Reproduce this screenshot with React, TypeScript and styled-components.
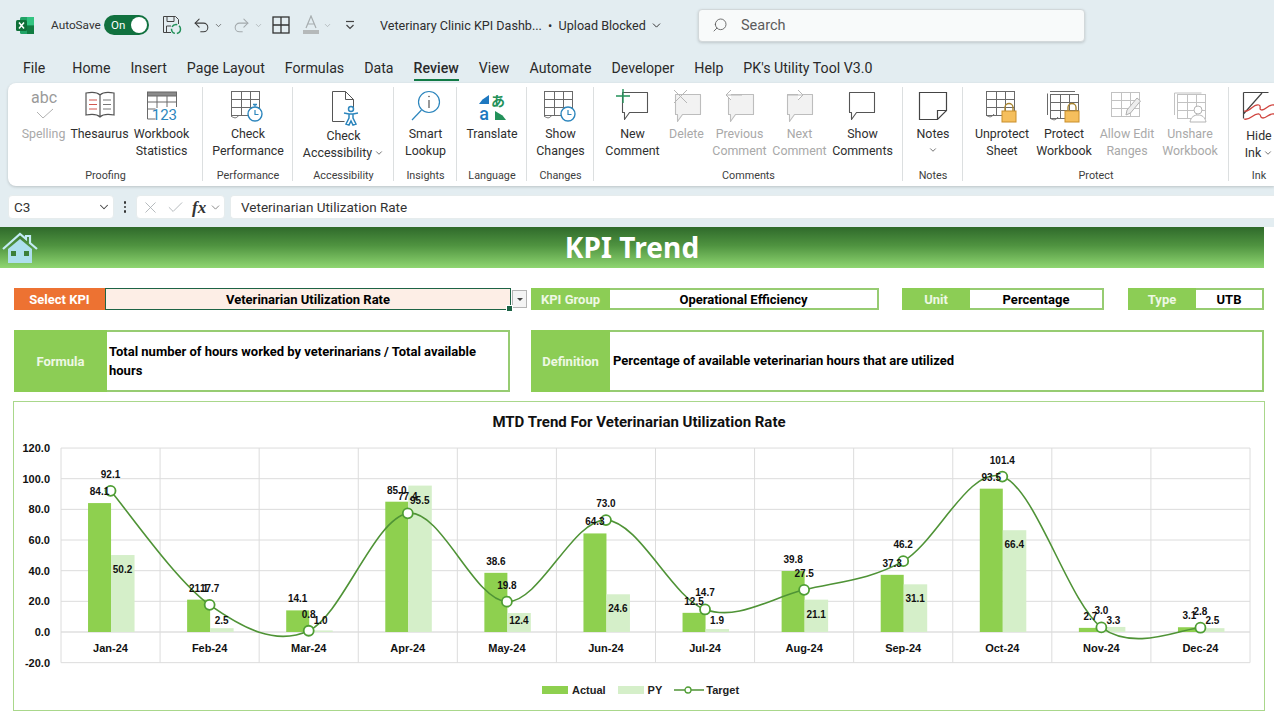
import React from "react";
import styled, { createGlobalStyle } from "styled-components";
import { ChevronDown, Search as SearchGlyph, Undo2, Redo2, X, Check } from "lucide-react";

const UI = `Roboto, "Liberation Sans", sans-serif`;
const SHEET = `Roboto, "Liberation Sans", sans-serif`;

const Global = createGlobalStyle`
  html, body { margin: 0; padding: 0; background: #fff; overflow: hidden; }
  body { width: 1274px; height: 720px; font-family: ${UI}; }
  * { box-sizing: border-box; }
`;

const Page = styled.div`width: 1274px; height: 720px; overflow: hidden; display: flex; flex-direction: column;`;
const Chrome = styled.header`background: #e3edf1; padding-bottom: 8px; color: #2b2b2b;`;

const TitleBar = styled.div`height: 50px; display: flex; align-items: center; padding-left: 16px;`;
const QatSlot = styled.span<{ $ml?: number; $w?: number; $muted?: boolean }>`
  margin-left: ${p => p.$ml ?? 0}px;
  ${p => (p.$w ? `width: ${p.$w}px;` : "")}
  display: inline-flex; align-items: center; justify-content: center;
  color: ${p => (p.$muted ? "#a3a9ac" : "#3c3c3c")};
  flex: none;
`;
const AutoSave = styled.span`margin-left: 17px; width: 53px; flex: none; font-size: 11.8px; color: #333;`;
const Toggle = styled.span`
  width: 45px; height: 20px; border-radius: 10px; background: #11713f;
  color: #fff; font-size: 11.5px; display: flex; align-items: center; justify-content: space-between;
  padding: 0 2px 0 7px; flex: none;
`;
const Knob = styled.i`width: 16px; height: 16px; border-radius: 50%; background: #fff; display: block;`;
const DocTitle = styled.span`margin-left: 25px; width: 285px; flex: none; font-size: 12.6px; color: #2e2e2e; white-space: pre; display: flex; align-items: center; gap: 4px;`;
const SearchBox = styled.div`
  margin-left: 33px; width: 387px; height: 33px; background: #f8fafa; border: 1px solid #d2d8da; border-radius: 4px;
  box-shadow: 0 1px 3px rgba(0,0,0,.16); display: flex; align-items: center; gap: 13px; padding-left: 13px;
  font-size: 14.5px; color: #5c5c5c; flex: none;
`;
const MirroredSearch = styled(SearchGlyph)`transform: scaleX(-1);`;

const TabBar = styled.nav`height: 33px; display: flex; align-items: flex-start; padding: 7px 0 0 23px; gap: 20px;`;
const Tab = styled.span<{ $on?: boolean; $extra?: number }>`
  position: relative; font-size: 14.2px; line-height: 22px; color: #2a2a2a; margin-right: ${p => p.$extra ?? 0}px;
  font-weight: ${p => (p.$on ? 500 : 400)};
  ${p => p.$on ? `&::after { content: ""; position: absolute; left: 0; right: 0; bottom: -2px; height: 2.5px; background: #117a45; }` : ""}
`;

const Ribbon = styled.section`
  height: 103px; margin-left: 8px; background: #fff; border-radius: 8px 0 0 8px;
  box-shadow: 0 1px 3px rgba(0,0,0,.18); display: flex; overflow: hidden;
`;
const Group = styled.div<{ $w: number; $last?: boolean }>`
  width: ${p => p.$w}px; flex: none; display: flex; flex-direction: column; position: relative;
  padding-top: 5px;
  &::after { content: ""; display: ${p => (p.$last ? "none" : "block")}; position: absolute; right: 0; top: 4px; bottom: 5px; width: 1px; background: #dcdfe0; }
`;
const GroupButtons = styled.div`flex: 1; display: flex; justify-content: center; min-height: 0;`;
const GroupName = styled.div`height: 20px; text-align: center; font-size: 10.8px; line-height: 20px; color: #3d3d3d;`;
const RibbonButton = styled.div<{ $w: number; $off?: boolean }>`
  width: ${p => p.$w}px; flex: none; display: flex; flex-direction: column; align-items: center;
  font-size: 12.4px; line-height: 17px; text-align: center; white-space: nowrap;
  color: ${p => (p.$off ? "#a9a9a9" : "#2f2f2f")};
`;
const IconSlot = styled.div<{ $h?: number }>`height: ${p => p.$h ?? 37}px; padding-top: 1px; display: flex; align-items: flex-start; justify-content: center;`;
const BtnChevron = styled.span`display: inline-flex; vertical-align: -1px; margin-left: 2px;`;

const FormulaBar = styled.div`height: 24px; margin-top: 9px; display: flex; align-items: stretch; padding-left: 8px; font-size: 13.5px;`;
const Cellbox = styled.div<{ $w?: number }>`
  ${p => (p.$w ? `width: ${p.$w}px; flex: none;` : "flex: 1;")}
  background: #fff; display: flex; align-items: center; border: 1px solid #e6eced;
  ${p => (p.$w ? "border-radius: 4px;" : "border-radius: 4px 0 0 4px; border-right: 0;")}
`;
const NameText = styled.span`padding-left: 5px; flex: 1; color: #333;`;
const Dots = styled.span`width: 22px; display: flex; flex-direction: column; gap: 2px; align-items: center; justify-content: center;
  i { width: 2.5px; height: 2.5px; background: #333; border-radius: 50%; display: block; }`;
const Fx = styled.span`font-family: "Liberation Serif", serif; font-style: italic; font-weight: 700; font-size: 17px; color: #333; margin-left: 7px; line-height: 1;`;
const FormulaText = styled.span`padding-left: 10px; color: #333;`;

const Sheet = styled.main`flex: 1; background: #fff; color: #000; font-family: ${SHEET};`;
const Banner = styled.div`
  width: 1264px; height: 41px; display: grid; grid-template-columns: 1fr auto 1fr; align-items: center;
  background: linear-gradient(#2f6a2b 0%, #4f9340 45%, #8fd671 100%);
`;
const BannerTitle = styled.h1`margin: 0 0 2px; font: 700 28px/1 "Noto Sans", sans-serif; color: #fff; letter-spacing: .1px;`;
const HomeLink = styled.span`display: flex; padding-left: 2px;`;

const FieldRow = styled.div<{ $h: number; $mt: number }>`display: flex; height: ${p => p.$h}px; margin-top: ${p => p.$mt}px; padding-left: 14px;`;
const Field = styled.div<{ $w: number; $gap?: number }>`
  width: ${p => p.$w}px; margin-left: ${p => p.$gap ?? 0}px; flex: none; display: flex; border: 2px solid #97cc72; border-left: 0;
  font-size: 13px; font-weight: 700;
`;
const FieldLabel = styled.div<{ $w: number; $orange?: boolean }>`
  width: ${p => p.$w}px; flex: none; margin: -2px 0; display: flex; align-items: center; justify-content: center;
  background: ${p => (p.$orange ? "#ed7232" : "#8ccd55")}; color: ${p => (p.$orange ? "#fff" : "#eef8e4")}; font-weight: 700;
`;
const FieldValue = styled.div`flex: 1; display: flex; align-items: center; justify-content: center;`;
const SelectedValue = styled(FieldValue)`
  background: #fdeee6; border: 1.5px solid #1d6345; position: relative;
  &::after { content: ""; position: absolute; right: -3px; bottom: -3px; width: 5px; height: 5px; background: #1d6345; border: 1px solid #fff; }
`;
const SelectField = styled(Field)`border: 0;`;
const SelectLabel = styled(FieldLabel)`margin: 0;`;
const DropArrow = styled.div`
  width: 15px; height: 18px; margin-left: 1px; align-self: center; background: #f4f4f4; border: 1px solid #b4b4b4; flex: none;
  display: flex; align-items: center; justify-content: center;
  &::before { content: ""; border: 3px solid transparent; border-top: 3.5px solid #444; border-bottom: 0; }
`;
const LongValue = styled.div<{ $pl: number }>`flex: 1; display: flex; align-items: center; padding: 0 4px 0 ${p => p.$pl}px; line-height: 19.5px;`;

const ChartCard = styled.section`
  width: 1252px; height: 310px; margin: 9px 0 0 13px; border: 1.5px solid #a9d78b; display: flex; flex-direction: column; align-items: center;
`;
const ChartTitle = styled.h2`margin: 0; height: 39.5px; font: 700 15px/40px ${SHEET}; color: #111;`;
const Legend = styled.div`display: flex; align-items: center; font: 700 11px/1 "Liberation Sans", sans-serif; color: #222; margin-top: 9px; margin-left: 3px;`;
const Swatch = styled.i<{ $c: string; $ml?: number }>`display: block; width: 26px; height: 8px; background: ${p => p.$c}; margin: 0 4px 0 ${p => p.$ml ?? 0}px;`;
const LegendLine = styled.svg`margin: 0 2px 0 12px;`;
const AxisText = styled.text`font: 700 11px "Liberation Sans", sans-serif; fill: #111;`;
const DataText = styled.text`font: 700 10px "Liberation Sans", sans-serif; fill: #111;`;

const G = "#6a6a6a";
const Svg = ({ w = 34, h = 34, children }: { w?: number; h?: number; children: React.ReactNode }) => (
  <svg width={w} height={h} viewBox={`0 0 ${w} ${h}`} fill="none" stroke={G} strokeWidth="1">{children}</svg>
);

const Grid = ({ x = 3, y = 2, c = G }: { x?: number; y?: number; c?: string }) => (
  <g stroke={c}>
    <rect x={x + .5} y={y + .5} width="28" height="24" fill="#fff" />
    <path d={`M${x} ${y + 8.5}h28M${x} ${y + 16.5}h28M${x + 10.5} ${y}v24M${x + 19.5} ${y}v24`} />
  </g>
);
const Clock = ({ cx, cy, stop }: { cx: number; cy: number; stop?: boolean }) => (
  <g stroke="#2d86bd" fill="#fff">
    <circle cx={cx} cy={cy} r="7" strokeWidth="1.4" />
    <path d={`M${cx} ${cy - 4}v4.5h3.5`} fill="none" strokeWidth="1.2" />
    {stop && <path d={`M${cx - 2} ${cy - 9.5}h4M${cx} ${cy - 9.5}v2`} strokeWidth="1.4" />}
  </g>
);
const Lock = ({ x, y }: { x: number; y: number }) => (
  <g>
    <path d={`M${x + 3} ${y + 7}v-3.5a4 4 0 0 1 8 0v3.5`} stroke="#a8842e" strokeWidth="1.4" fill="none" />
    <rect x={x} y={y + 7} width="14" height="11" fill="#f5bf5d" stroke="#c98f2c" />
  </g>
);
const Bubble = ({ c = "#555", fill = "#fff", x = 6, y = 4 }: { c?: string; fill?: string; x?: number; y?: number }) => (
  <path d={`M${x + .5} ${y + .5}h25v20h-18l-5 7v-7h-2z`} stroke={c} fill={fill} strokeWidth="1.1" strokeLinejoin="round" />
);
const CH = ({ s = 11, c = "#444" }: { s?: number; c?: string }) => <ChevronDown size={s} color={c} strokeWidth={1.8} />;

const Icons = {
  spelling: (
    <Svg><text x="17" y="14" textAnchor="middle" fontFamily={UI} fontSize="16" fill="#9a9a9a" stroke="none">abc</text><path d="M10 23l6 6 10-9" stroke="#b2b2b2" /></Svg>
  ),
  thesaurus: (
    <Svg><path d="M17 6c-3-3-9-3-14-2v22c5-1 11-1 14 2 3-3 9-3 14-2V4c-5-1-11-1-14 2zM17 6v22" stroke="#555" strokeWidth="1.2" fill="#fff" />
      <path d="M6 11h8M6 15.5h8M6 20h8" stroke="#d1574f" /><path d="M20 11h8M20 15.5h8M20 20h8" stroke="#777" /></Svg>
  ),
  stats: (
    <Svg><rect x="2.5" y="3" width="29" height="4" fill="#8a8a8a" stroke="#666" /><path d="M2.5 7v23h8M31.5 7v11M2.5 13h29M2.5 20h8M12 7v12M22 7v11" />
      <text x="32" y="31" textAnchor="end" fontFamily={UI} fontSize="15" fill="#2d86bd" stroke="none">123</text></Svg>
  ),
  performance: (
    <Svg w={38}><Grid x={2} y={2} /><path d="M2 27c4 3 6 2 8-1" /><Clock cx={26} cy={25} stop /></Svg>
  ),
  accessibility: (
    <Svg w={36} h={38}><path d="M6.5 2.5h13l8 8v8M6.5 2.5v30h12M19.5 2.5v8h8" stroke="#555" />
      <g stroke="#2d86bd" strokeWidth="1.5" fill="#fff"><circle cx="25" cy="20" r="2.5" /><path d="M18 24l5 1h4l5-1M23 25v4l-3 6 3 1 2-4 2 4 3-1-3-6v-4" /></g></Svg>
  ),
  lookup: (
    <Svg><circle cx="20" cy="13" r="10.5" stroke="#2d86bd" strokeWidth="1.2" /><path d="M12.5 21L3 31" stroke="#2d86bd" strokeWidth="1.2" /><path d="M20 11v8" stroke="#555" strokeWidth="1.2" /><circle cx="20" cy="7.5" r=".8" fill="#555" stroke="none" /></Svg>
  ),
  translate: (
    <Svg>
      <path d="M14 6v9H4l3.5-4.5z" fill="#1e78c0" stroke="none" />
      <text x="23" y="17" textAnchor="middle" fontFamily={`"Noto Sans CJK JP", sans-serif`} fontWeight="700" fontSize="14" fill="#23915a" stroke="none">あ</text>
      <text x="9" y="31" textAnchor="middle" fontFamily={UI} fontWeight="500" fontSize="18" fill="#1e78c0" stroke="none">a</text>
      <path d="M20 22v9h11l-3.5-4.5z" fill="#23915a" stroke="none" />
    </Svg>
  ),
  changes: (
    <Svg w={38}><Grid x={2} y={2} /><path d="M2 27c4 3 6 2 8-1" /><Clock cx={26} cy={25} /></Svg>
  ),
  newComment: (
    <Svg w={38}><Bubble x={8} y={3} /><path d="M9 0v14M2 7h14" stroke="#23915a" strokeWidth="1.4" /></Svg>
  ),
  del: (
    <Svg w={38}><Bubble x={7} y={5} c="#bdbdbd" fill="#f2f2f2" /><path d="M6 1l13 13M19 1L6 14" stroke="#b6b6b6" /></Svg>
  ),
  prev: (
    <Svg w={38}><Bubble x={7} y={5} c="#bdbdbd" fill="#f2f2f2" /><path d="M21 6H5M10 1L5 6l5 5" stroke="#b6b6b6" fill="#fff" /></Svg>
  ),
  next: (
    <Svg w={38}><Bubble x={6} y={5} c="#bdbdbd" fill="#f2f2f2" /><path d="M6 6h16M17 1l5 5-5 5" stroke="#b6b6b6" fill="#fff" /></Svg>
  ),
  show: (
    <Svg w={38}><Bubble x={5} y={3} /></Svg>
  ),
  notes: (
    <Svg><path d="M3.5 3.5h27v18l-9 9h-18zM30.5 21.5h-9v9" stroke="#444" strokeWidth="1.2" fill="#fff" /></Svg>
  ),
  unprotect: (
    <Svg w={38} h={36}><Grid x={3} y={2} /><path d="M3 26c4 3 6 2 8-1" /><Lock x={19} y={15} /></Svg>
  ),
  protect: (
    <Svg w={38} h={36}><path d="M2.5 26V4.5M5 2.5h25" /><Grid x={5} y={5} /><path d="M5 29c4 3 6 2 8-1" /><Lock x={20} y={15} /></Svg>
  ),
  allow: (
    <Svg w={38}><Grid x={3} y={3} c="#c2c2c2" /><path d="M18 26l1-5L29 9l3.5 3-10 12z" stroke="#b0b0b0" fill="#ededed" /></Svg>
  ),
  unshare: (
    <Svg w={38}><path d="M3.5 26V4h27" stroke="#c2c2c2" /><Grid x={6} y={5} c="#c2c2c2" /><circle cx="27" cy="21" r="4" stroke="#b5b5b5" fill="#fff" /><path d="M19 33c1-5 4-7 8-7s7 2 8 7z" stroke="#b5b5b5" fill="#fff" /></Svg>
  ),
  ink: (
    <Svg w={38}><path d="M3.5 3.5h25M3.5 3.5v26M3.5 25L22 4" stroke="#444" strokeWidth="1.2" /><path d="M4 22c6 2 9-8 15-6 3 1-1 5 3 5s6-6 12-5M4 30c6 2 9-6 15-5 3 1 0 4 4 4s6-5 11-4" stroke="#d0453f" strokeWidth="1.3" /></Svg>
  ),
};

type Btn = { w: number; lines: string[]; icon: keyof typeof Icons; off?: boolean; chevron?: boolean; under?: boolean; iconH?: number };
type Grp = { name: string; w: number; buttons: Btn[]; last?: boolean };
const groups: Grp[] = [
  { name: "Proofing", w: 195, buttons: [
    { w: 52, lines: ["Spelling"], icon: "spelling", off: true },
    { w: 60, lines: ["Thesaurus"], icon: "thesaurus" },
    { w: 64, lines: ["Workbook", "Statistics"], icon: "stats" },
  ] },
  { name: "Performance", w: 90, buttons: [{ w: 80, lines: ["Check", "Performance"], icon: "performance" }] },
  { name: "Accessibility", w: 101, buttons: [{ w: 90, lines: ["Check", "Accessibility"], icon: "accessibility", chevron: true, iconH: 39 }] },
  { name: "Insights", w: 63, buttons: [{ w: 55, lines: ["Smart", "Lookup"], icon: "lookup" }] },
  { name: "Language", w: 70, buttons: [{ w: 60, lines: ["Translate"], icon: "translate" }] },
  { name: "Changes", w: 67, buttons: [{ w: 58, lines: ["Show", "Changes"], icon: "changes" }] },
  { name: "Comments", w: 309, buttons: [
    { w: 60, lines: ["New", "Comment"], icon: "newComment" },
    { w: 48, lines: ["Delete"], icon: "del", off: true },
    { w: 58, lines: ["Previous", "Comment"], icon: "prev", off: true },
    { w: 62, lines: ["Next", "Comment"], icon: "next", off: true },
    { w: 64, lines: ["Show", "Comments"], icon: "show" },
  ] },
  { name: "Notes", w: 60, buttons: [{ w: 50, lines: ["Notes"], icon: "notes", under: true }] },
  { name: "Protect", w: 266, buttons: [
    { w: 62, lines: ["Unprotect", "Sheet"], icon: "unprotect" },
    { w: 62, lines: ["Protect", "Workbook"], icon: "protect" },
    { w: 64, lines: ["Allow Edit", "Ranges"], icon: "allow", off: true },
    { w: 62, lines: ["Unshare", "Workbook"], icon: "unshare", off: true },
  ] },
  { name: "Ink", w: 60, last: true, buttons: [{ w: 60, lines: ["Hide", "Ink"], icon: "ink", chevron: true, iconH: 39 }] },
];

const tabs = ["File", "Home", "Insert", "Page Layout", "Formulas", "Data", "Review", "View", "Automate", "Developer", "Help", "PK's Utility Tool V3.0"];

const months = ["Jan-24", "Feb-24", "Mar-24", "Apr-24", "May-24", "Jun-24", "Jul-24", "Aug-24", "Sep-24", "Oct-24", "Nov-24", "Dec-24"];
const actual = [84.1, 21.1, 14.1, 85.0, 38.6, 64.3, 12.5, 39.8, 37.3, 93.5, 2.7, 3.1];
const py = [50.2, 2.5, 1.0, 95.5, 12.4, 24.6, 1.9, 21.1, 31.1, 66.4, 3.3, 2.5];
const target = [92.1, 17.7, 0.8, 77.4, 19.8, 73.0, 14.7, 27.5, 46.2, 101.4, 3.0, 2.8];

const LEFT = 61, RIGHT = 1250, ZERO = 632, UNIT = 1.533, BAND = (RIGHT - LEFT) / 12;
const yOf = (v: number) => ZERO - v * UNIT;
const xOf = (i: number) => LEFT + BAND * (i + 0.5);
const ticks = [120, 100, 80, 60, 40, 20, 0, -20];
const linePath = () => {
  const pts = target.map((v, i) => [xOf(i), yOf(v)]);
  let d = `M${pts[0][0]} ${pts[0][1]}`;
  for (let i = 0; i < pts.length - 1; i++) {
    const p0 = pts[Math.max(i - 1, 0)], p1 = pts[i], p2 = pts[i + 1], p3 = pts[Math.min(i + 2, pts.length - 1)];
    d += `C${p1[0] + (p2[0] - p0[0]) / 6} ${p1[1] + (p2[1] - p0[1]) / 6} ${p2[0] - (p3[0] - p1[0]) / 6} ${p2[1] - (p3[1] - p1[1]) / 6} ${p2[0]} ${p2[1]}`;
  }
  return d;
};

const Chart = () => (
  <svg width="1249" height="234" viewBox="15 442 1249 234" fill="none">
    {ticks.map(t => <path key={t} d={`M${LEFT} ${yOf(t)}H${RIGHT}`} stroke={t === 0 ? "#cfcfcf" : "#dcdcdc"} strokeWidth="1" />)}
    {Array.from({ length: 13 }, (_, i) => <path key={i} d={`M${LEFT + BAND * i} ${yOf(120)}V${yOf(-20)}`} stroke="#dcdcdc" strokeWidth="1" />)}
    {ticks.map(t => <AxisText key={t} x={50} y={yOf(t) + 4} textAnchor="end">{t.toFixed(1)}</AxisText>)}
    {months.map((m, i) => <AxisText key={m} x={xOf(i)} y={652} textAnchor="middle">{m}</AxisText>)}
    {actual.map((v, i) => <rect key={i} x={xOf(i) - 22.5} y={yOf(v)} width="23" height={v * UNIT} fill="#8ed04f" />)}
    {py.map((v, i) => <rect key={i} x={xOf(i) + 0.5} y={yOf(v)} width="23.5" height={v * UNIT} fill="#d5efc9" />)}
    <path d={linePath()} stroke="#4f9336" strokeWidth="1.6" />
    {target.map((v, i) => <circle key={i} cx={xOf(i)} cy={yOf(v)} r="5" fill="#fff" stroke="#4f9e34" strokeWidth="1.8" />)}
    {actual.map((v, i) => <DataText key={i} x={xOf(i) - 11} y={yOf(v) - 8} textAnchor="middle">{v.toFixed(1)}</DataText>)}
    {py.map((v, i) => <DataText key={i} x={xOf(i) + 12} y={Math.min(yOf(v) + 14, 620) + 4} textAnchor="middle">{v.toFixed(1)}</DataText>)}
    {target.map((v, i) => <DataText key={i} x={xOf(i)} y={yOf(v) - 13} textAnchor="middle">{v.toFixed(1)}</DataText>)}
  </svg>
);

const HomeIcon = () => (
  <svg width="36" height="32" viewBox="0 0 36 32" fill="none">
    <path d="M1 17L18 2l6 5V4h4v7l7 6" stroke="#c4ecf5" strokeWidth="2.2" />
    <path d="M6 17L18 7l12 10v14H6z" fill="#aedfee" />
    <rect x="9" y="19" width="5" height="5" fill="#3d7f3a" /><rect x="22" y="19" width="5" height="5" fill="#3d7f3a" />
  </svg>
);

const ExcelLogo = () => (
  <svg width="18" height="17" viewBox="0 0 18 17">
    <rect x="4" y="0" width="14" height="17" rx="1.5" fill="#21a366" />
    <rect x="11" y="0" width="7" height="8.5" fill="#33c481" /><rect x="11" y="8.5" width="7" height="8.5" fill="#107c41" />
    <rect x="0" y="3" width="11" height="11" rx="1.5" fill="#0f7038" />
    <path d="M3 5.5l5 6M8 5.5l-5 6" stroke="#fff" strokeWidth="1.5" />
  </svg>
);
const SaveIcon = () => (
  <svg width="20" height="20" viewBox="0 0 20 20" fill="none" stroke="#444">
    <path d="M1.5 1.5h12l3 3V9M1.5 1.5v16H9M5 1.5v5h7v-5M4.5 17.5V11H9" />
    <circle cx="14" cy="14" r="4.5" stroke="#23915a" strokeWidth="1.5" strokeDasharray="6 2" />
  </svg>
);
const BordersIcon = () => (
  <svg width="18" height="18" viewBox="0 0 18 18" fill="none" stroke="#333" strokeWidth="1.3"><rect x="1" y="1" width="16" height="16" /><path d="M9 1v16M1 9h16" /></svg>
);
const FontColorIcon = () => (
  <svg width="18" height="20" viewBox="0 0 18 20" fill="none"><path d="M4 13L9 1l5 12M6 9h6" stroke="#a7adaf" strokeWidth="1.2" /><rect x="1" y="15" width="16" height="4" fill="#b5b9ba" /></svg>
);
const QatMore = () => (
  <svg width="10" height="10" viewBox="0 0 10 10" fill="none" stroke="#444"><path d="M1 1.5h8" strokeWidth="1.2" /><path d="M1.5 5L5 8.5 8.5 5" strokeWidth="1.2" /></svg>
);

const App = () => (
  <Page>
    <Global />
    <Chrome>
      <TitleBar>
        <QatSlot><ExcelLogo /></QatSlot>
        <AutoSave>AutoSave</AutoSave>
        <Toggle>On<Knob /></Toggle>
        <QatSlot $ml={13}><SaveIcon /></QatSlot>
        <QatSlot $ml={10}><Undo2 size={19} strokeWidth={1.3} /></QatSlot>
        <QatSlot $ml={3}><CH s={9} /></QatSlot>
        <QatSlot $ml={9} $muted><Redo2 size={19} strokeWidth={1.3} /></QatSlot>
        <QatSlot $ml={3} $muted><CH s={9} c="#a3a9ac" /></QatSlot>
        <QatSlot $ml={9}><BordersIcon /></QatSlot>
        <QatSlot $ml={12}><FontColorIcon /></QatSlot>
        <QatSlot $ml={3}><CH s={9} c="#a3a9ac" /></QatSlot>
        <QatSlot $ml={13}><QatMore /></QatSlot>
        <DocTitle>Veterinary Clinic KPI Dashb...{"  "}•  Upload Blocked<CH s={13} c="#333" /></DocTitle>
        <SearchBox><MirroredSearch size={16} strokeWidth={1.3} />Search</SearchBox>
      </TitleBar>
      <TabBar>
        {tabs.map((t, i) => <Tab key={t} $on={t === "Review"} $extra={i === 0 ? 7 : 0}>{t}</Tab>)}
      </TabBar>
      <Ribbon>
        {groups.map(g => (
          <Group key={g.name} $w={g.w} $last={g.last}>
            <GroupButtons>
              {g.buttons.map(b => (
                <RibbonButton key={b.lines.join()} $w={b.w} $off={b.off}>
                  <IconSlot $h={b.iconH}>{Icons[b.icon]}</IconSlot>
                  {b.lines.map((l, i) => (
                    <div key={l}>{l}{b.chevron && i === b.lines.length - 1 && <BtnChevron><CH s={10} /></BtnChevron>}</div>
                  ))}
                  {b.under && <div><CH s={10} /></div>}
                </RibbonButton>
              ))}
            </GroupButtons>
            <GroupName>{g.name}</GroupName>
          </Group>
        ))}
      </Ribbon>
      <FormulaBar>
        <Cellbox $w={106}><NameText>C3</NameText><QatSlot $w={18}><CH s={14} /></QatSlot></Cellbox>
        <Dots><i /><i /><i /></Dots>
        <Cellbox $w={89}>
          <QatSlot $ml={4} $muted><X size={19} strokeWidth={1} /></QatSlot>
          <QatSlot $ml={6} $muted><Check size={19} strokeWidth={1} /></QatSlot>
          <Fx>fx</Fx>
          <QatSlot $ml={3} $muted><CH s={13} c="#888" /></QatSlot>
        </Cellbox>
        <QatSlot $w={5} />
        <Cellbox><FormulaText>Veterinarian Utilization Rate</FormulaText></Cellbox>
      </FormulaBar>
    </Chrome>
    <Sheet>
      <Banner>
        <HomeLink><HomeIcon /></HomeLink>
        <BannerTitle>KPI Trend</BannerTitle>
      </Banner>
      <FieldRow $h={22} $mt={20}>
        <SelectField $w={497}>
          <SelectLabel $w={91} $orange>Select KPI</SelectLabel>
          <SelectedValue>Veterinarian Utilization Rate</SelectedValue>
        </SelectField>
        <DropArrow />
        <Field $w={348} $gap={4}><FieldLabel $w={79}>KPI Group</FieldLabel><FieldValue>Operational Efficiency</FieldValue></Field>
        <Field $w={202} $gap={23}><FieldLabel $w={68}>Unit</FieldLabel><FieldValue>Percentage</FieldValue></Field>
        <Field $w={136} $gap={24}><FieldLabel $w={68}>Type</FieldLabel><FieldValue>UTB</FieldValue></Field>
      </FieldRow>
      <FieldRow $h={62} $mt={20}>
        <Field $w={496}><FieldLabel $w={93}>Formula</FieldLabel><LongValue $pl={2}>Total number of hours worked by veterinarians / Total available hours</LongValue></Field>
        <Field $w={733} $gap={21}><FieldLabel $w={79}>Definition</FieldLabel><LongValue $pl={3}>Percentage of available veterinarian hours that are utilized</LongValue></Field>
      </FieldRow>
      <ChartCard>
        <ChartTitle>MTD Trend For Veterinarian Utilization Rate</ChartTitle>
        <Chart />
        <Legend>
          <Swatch $c="#8ed04f" />Actual
          <Swatch $c="#d5efc9" $ml={12} />PY
          <LegendLine width="30" height="10" viewBox="0 0 30 10" fill="none">
            <path d="M0 5h30" stroke="#4f9336" strokeWidth="1.5" /><circle cx="14" cy="5" r="3" fill="#fff" stroke="#4f9e34" strokeWidth="1.3" />
          </LegendLine>
          Target
        </Legend>
      </ChartCard>
    </Sheet>
  </Page>
);

export default App;
